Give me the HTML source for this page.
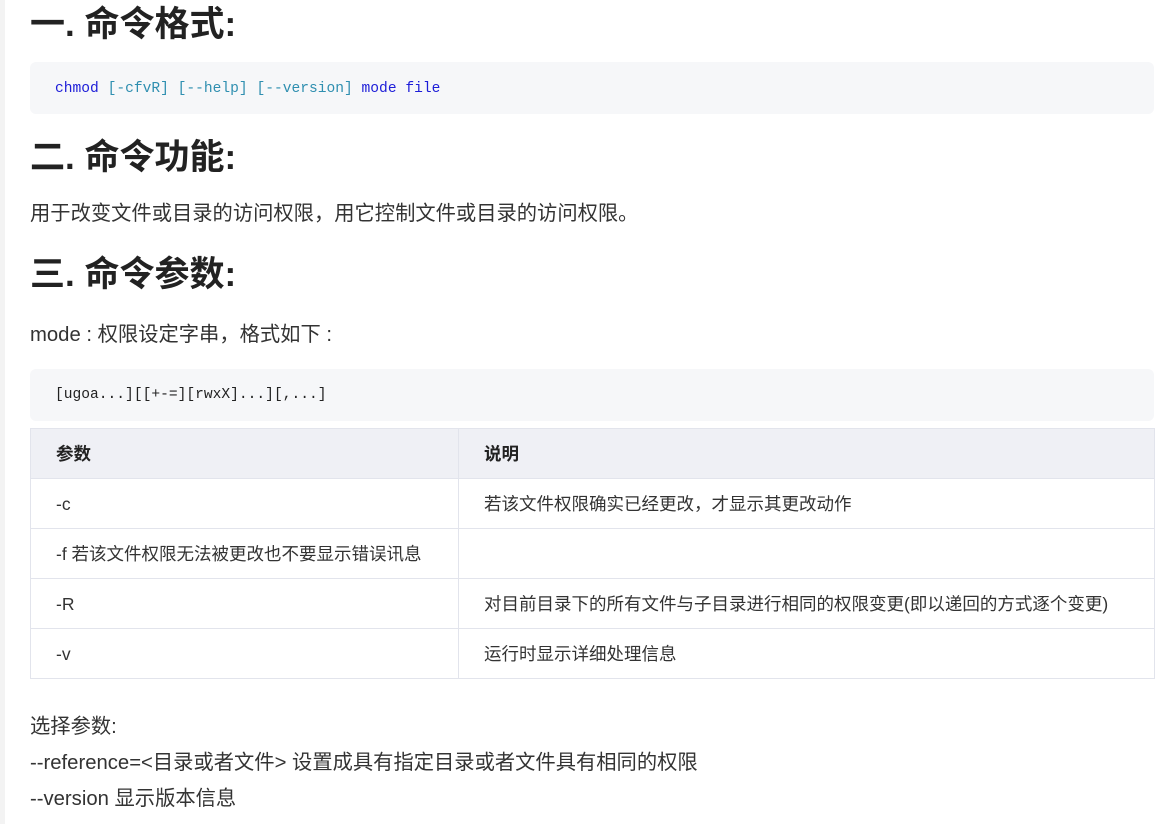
<!DOCTYPE html>
<html><head><meta charset="utf-8"><style>
body{margin:0;width:1164px;height:824px;background:#fff;position:relative;overflow:hidden;font-family:"Liberation Sans","Noto Sans CJK SC",sans-serif;color:#333}
.strip{position:absolute;left:0;top:0;width:5px;height:824px;background:#f3f3f3}
h2{position:absolute;left:30px;margin:0;font-size:35px;font-weight:bold;color:#222;line-height:44px}
.code{position:absolute;left:30px;width:1124px;background:#f6f7f9;border-radius:6px;font-family:"Liberation Mono","DejaVu Sans Mono",monospace;font-size:14.6px;box-sizing:border-box;padding-left:25px}
p{position:absolute;left:30px;margin:0;font-size:20.3px;line-height:26px;color:#333;white-space:nowrap}
table{position:absolute;left:30px;top:428px;width:1125px;border-collapse:collapse;font-size:17.5px;color:#333}
td,th{border:1px solid #e2e4ec;height:49px;padding:0 0 0 25px;text-align:left;vertical-align:middle;line-height:24px}
th{background:#eff0f5;font-weight:bold;color:#222}
</style></head><body>
<div class="strip"></div>
<h2 style="top:3px">一. 命令格式:</h2>
<div class="code" style="top:62px;height:52px;line-height:54px"><span style="color:#1d1dd8">chmod</span> <span style="color:#2f8fb0">[-cfvR] [--help] [--version]</span> <span style="color:#1d1dd8">mode file</span></div>
<h2 style="top:136px">二. 命令功能:</h2>
<p style="top:201px">用于改变文件或目录的访问权限，用它控制文件或目录的访问权限。</p>
<h2 style="top:253px">三. 命令参数:</h2>
<p style="top:322px">mode : 权限设定字串，格式如下 :</p>
<div class="code" style="top:369px;height:52px;line-height:52px;color:#222">[ugoa...][[+-=][rwxX]...][,...]</div>
<table>
<tr><th style="width:402px">参数</th><th>说明</th></tr>
<tr><td>-c</td><td>若该文件权限确实已经更改，才显示其更改动作</td></tr>
<tr><td>-f 若该文件权限无法被更改也不要显示错误讯息</td><td></td></tr>
<tr><td>-R</td><td>对目前目录下的所有文件与子目录进行相同的权限变更(即以递回的方式逐个变更)</td></tr>
<tr><td>-v</td><td>运行时显示详细处理信息</td></tr>
</table>
<p style="top:714px">选择参数:</p>
<p style="top:750px">--reference=&lt;目录或者文件&gt; 设置成具有指定目录或者文件具有相同的权限</p>
<p style="top:786px">--version 显示版本信息</p>
</body></html>
